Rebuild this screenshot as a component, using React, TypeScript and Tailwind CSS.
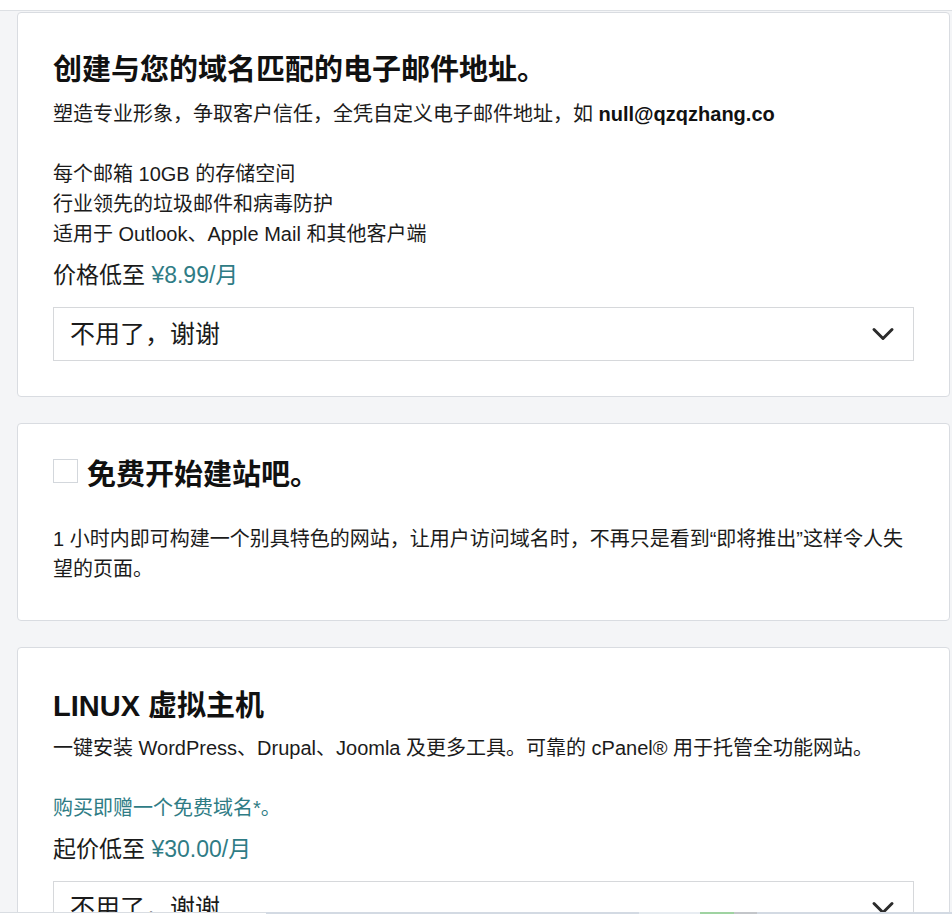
import { ChevronDown } from "lucide-react";

function NoThanksSelect() {
  return (
    <div className="flex h-[54px] items-center justify-between border border-[#d6d8db] bg-white pl-[16px] pr-[12px]">
      <span className="text-[25px] leading-[30px] text-[#1b1b1b]">不用了，谢谢</span>
      <ChevronDown size={36} strokeWidth={2} className="text-[#2b2b2b]" />
    </div>
  );
}

function Price({ label, value }: { label: string; value: string }) {
  return (
    <p className="mt-[11px] text-[23px] leading-[30px] text-[#1b1b1b]">
      {label} <span className="text-[#2f7c85]">{value}</span>
    </p>
  );
}

export default function App() {
  return (
    <div className="min-h-screen bg-[#f4f5f7] font-['Liberation_Sans','Noto_Sans_CJK_SC',sans-serif]">
      <div className="h-[11px] border-b border-[#dde0e4] bg-white" />

      <div className="flex flex-col gap-[26px] pl-[17px] pr-[2px] pt-[1px] pb-[40px]">
        {/* 邮箱 */}
        <section className="rounded-[4px] border border-[#d9dce1] bg-white px-[35px] pt-[39px] pb-[35px]">
          <h2 className="text-[29px] font-bold leading-[36px] text-[#111]">
            创建与您的域名匹配的电子邮件地址。
          </h2>
          <p className="mt-[11px] text-[20px] leading-[30px] text-[#1b1b1b]">
            塑造专业形象，争取客户信任，全凭自定义电子邮件地址，如{" "}
            <span className="font-bold text-[#111]">null@qzqzhang.co</span>
          </p>
          <ul className="mt-[30px] text-[20px] leading-[30px] text-[#1b1b1b]">
            <li>每个邮箱 10GB 的存储空间</li>
            <li>行业领先的垃圾邮件和病毒防护</li>
            <li>适用于 Outlook、Apple Mail 和其他客户端</li>
          </ul>
          <Price label="价格低至" value="¥8.99/月" />
          <div className="mt-[17px]">
            <NoThanksSelect />
          </div>
        </section>

        {/* 建站 */}
        <section className="rounded-[4px] border border-[#d9dce1] bg-white px-[35px] pt-[33px] pb-[36px]">
          <div className="flex items-start gap-[9px]">
            <span className="mt-[2px] h-[24px] w-[25px] shrink-0 border border-[#d3d7dc] bg-white" />
            <h2 className="text-[29px] font-bold leading-[36px] text-[#111]">免费开始建站吧。</h2>
          </div>
          <p className="mt-[31px] text-[20px] leading-[30px] text-[#1b1b1b]">
            1 小时内即可构建一个别具特色的网站，让用户访问域名时，不再只是看到“即将推出”这样令人失望的页面。
          </p>
        </section>

        {/* 主机 */}
        <section className="rounded-[4px] border border-[#d9dce1] bg-white px-[35px] pt-[40px] pb-[35px]">
          <h2 className="text-[29px] font-bold leading-[36px] text-[#111]">LINUX 虚拟主机</h2>
          <p className="mt-[9px] text-[20px] leading-[30px] text-[#1b1b1b]">
            一键安装 WordPress、Drupal、Joomla 及更多工具。可靠的 cPanel® 用于托管全功能网站。
          </p>
          <p className="mt-[30px] text-[20px] leading-[30px] text-[#2f7c85]">购买即赠一个免费域名*。</p>
          <Price label="起价低至" value="¥30.00/月" />
          <div className="mt-[17px]">
            <NoThanksSelect />
          </div>
        </section>
      </div>

      {/* 底部浮层条 */}
      <div className="fixed bottom-0 left-0 right-0 flex h-[2px]">
        <div className="w-[266px] border-t border-[#d9dde2] bg-white" />
        <div className="w-[373px] bg-[#d3dae3]" />
        <div className="w-[61px] bg-[#e8edf2]" />
        <div className="w-[34px] bg-[#9fd3a1]" />
        <div className="w-[23px] bg-[#c3c6ca]" />
        <div className="flex-1 bg-[#d3dae3]" />
      </div>
    </div>
  );
}
